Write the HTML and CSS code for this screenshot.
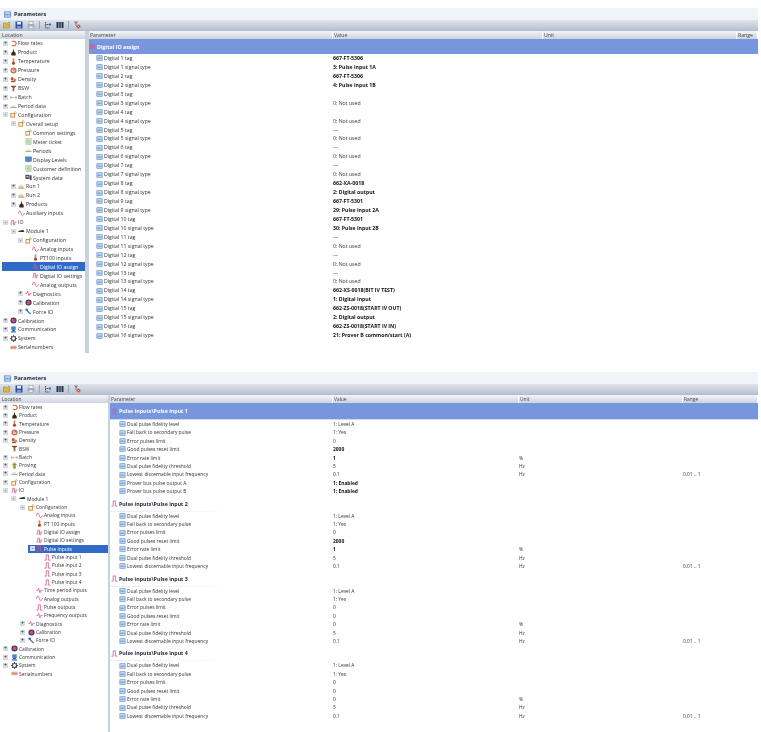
FILE: index.html
```html
<!DOCTYPE html>
<html lang="en">
<head>
    <meta charset="UTF-8">
    <meta name="viewport" content="width=device-width, initial-scale=1.0">
    <title>Parameters</title>
    <link rel="stylesheet" href="styles.css">
</head>
<body>

<svg class="defs" width="0" height="0">
    <symbol id="i-open" viewBox="0 0 16 16"><path d="M1 4h5l1 2h6v8H1z" fill="#e2b640" stroke="#a57a1c"/><path d="M9 4l3-2 2 3" fill="none" stroke="#4f9a3a" stroke-width="1.5"/></symbol>
    <symbol id="i-save" viewBox="0 0 16 16"><rect x="1" y="1" width="14" height="14" fill="#2b4fa8"/><rect x="4" y="2" width="8" height="5" fill="#e6ecf7"/><rect x="4" y="10" width="8" height="5" fill="#7f95c9"/></symbol>
    <symbol id="i-print" viewBox="0 0 16 16"><rect x="4" y="1" width="8" height="6" fill="#f2f2f2" stroke="#8b93a3"/><rect x="1" y="6" width="14" height="7" fill="#a9b0bd"/><rect x="4" y="10" width="8" height="5" fill="#eee" stroke="#8b93a3"/></symbol>
    <symbol id="i-tree" viewBox="0 0 16 16"><path d="M3 2v12h9M3 7h7" fill="none" stroke="#25304a" stroke-width="1.6" stroke-dasharray="2 1"/><rect x="10" y="5" width="4" height="4" fill="#2b6fc2"/></symbol>
    <symbol id="i-cols" viewBox="0 0 16 16"><path d="M1 2h14v12H1z" fill="#27304a"/><path d="M5 2v12M8 2v12M11 2v12" stroke="#cfd6e2"/></symbol>
    <symbol id="i-filter" viewBox="0 0 16 16"><path d="M2 1h8L7 6v6L5 10V6z" fill="#7d8696"/><circle cx="11" cy="11" r="4" fill="#d8452e"/><path d="M9 9l4 4M13 9l-4 4" stroke="#fff"/></symbol>
    <symbol id="i-param" viewBox="0 0 16 16"><rect x="1" y="2" width="14" height="12" fill="#c6daf3" stroke="#4a7fc0" stroke-width="1.6"/><path d="M3 8.5h10" stroke="#2f62a8" stroke-width="2.2" stroke-dasharray="3 1"/></symbol>
    <symbol id="i-flow" viewBox="0 0 16 16"><path d="M4 3h5a5 5 0 0 1 0 10H4" fill="none" stroke="#d9602c" stroke-width="2.4"/></symbol>
    <symbol id="i-product" viewBox="0 0 16 16"><path d="M7 1h2v4l4 4v6H3V9l4-4z" fill="#3b2a17"/></symbol>
    <symbol id="i-temp" viewBox="0 0 16 16"><rect x="6" y="1" width="4" height="10" fill="#c98a70"/><circle cx="8" cy="12" r="3.5" fill="#a4482c"/></symbol>
    <symbol id="i-press" viewBox="0 0 16 16"><circle cx="8" cy="8" r="7" fill="#c9764f"/><circle cx="8" cy="8" r="3.5" fill="#f0d2bf"/><path d="M8 8l3-3" stroke="#6d2d14" stroke-width="1.4"/></symbol>
    <symbol id="i-density" viewBox="0 0 16 16"><circle cx="5" cy="6" r="3.5" fill="#c0563a"/><circle cx="11" cy="9" r="3.5" fill="#d98a4c"/><rect x="2" y="11" width="9" height="3" fill="#a8432a"/></symbol>
    <symbol id="i-bsw" viewBox="0 0 16 16"><path d="M2 2h12l-4 5v7H6V7z" fill="#8c6a52"/><rect x="2" y="2" width="12" height="2" fill="#5f4635"/></symbol>
    <symbol id="i-batch" viewBox="0 0 16 16"><path d="M1 8h14" stroke="#6f8a58" stroke-width="1.6" stroke-dasharray="2 1.5"/><path d="M2 5v6M14 5v6" stroke="#a5763b" stroke-width="1.6"/></symbol>
    <symbol id="i-prove" viewBox="0 0 16 16"><circle cx="8" cy="6" r="5" fill="#d9b04a"/><circle cx="8" cy="6" r="2" fill="#8d6a1c"/><path d="M5 10v5h6v-5" fill="#7d9a4b"/></symbol>
    <symbol id="i-period" viewBox="0 0 16 16"><path d="M1 10h14" stroke="#6c9a55" stroke-width="1.8"/><path d="M4 7h8" stroke="#a9c79a" stroke-width="1.5"/></symbol>
    <symbol id="i-config" viewBox="0 0 16 16"><rect x="2" y="6" width="8" height="8" fill="none" stroke="#d58b1f" stroke-width="2.2"/><circle cx="12" cy="4" r="2.4" fill="none" stroke="#9a8a5a" stroke-width="1.4"/></symbol>
    <symbol id="i-doc" viewBox="0 0 16 16"><rect x="2" y="1" width="12" height="14" fill="#cfe5c6" stroke="#8fb585"/><path d="M4 5h8M4 8h8M4 11h8" stroke="#8fb585"/></symbol>
    <symbol id="i-display" viewBox="0 0 16 16"><rect x="1" y="2" width="14" height="10" fill="#4f8ac9" stroke="#2f5f97"/><rect x="5" y="12" width="6" height="2" fill="#6a7a8c"/></symbol>
    <symbol id="i-system" viewBox="0 0 16 16"><rect x="1" y="2" width="9" height="9" fill="#2e2e2e"/><rect x="3" y="4" width="5" height="4" fill="#cfcfcf"/><rect x="11" y="3" width="4" height="11" fill="#444"/></symbol>
    <symbol id="i-run" viewBox="0 0 16 16"><path d="M1 12h14" stroke="#7c7c55" stroke-width="1.4"/><path d="M3 12V7M7 12V4M11 12V7" stroke="#d29a2a" stroke-width="2"/></symbol>
    <symbol id="i-wave" viewBox="0 0 16 16"><path d="M1 9c2-9 4-9 6-2s4 9 8 0" fill="none" stroke="#d4558f" stroke-width="1.8"/></symbol>
    <symbol id="i-square" viewBox="0 0 16 16"><path d="M1 12h3V3h4v10h3V7h4" fill="none" stroke="#d4558f" stroke-width="1.8"/></symbol>
    <symbol id="i-pulse" viewBox="0 0 16 16"><path d="M1 14h4V2h5v12h5" fill="none" stroke="#d4558f" stroke-width="1.8"/></symbol>
    <symbol id="i-module" viewBox="0 0 16 16"><path d="M1 7l12-3v3l2 1-2 1H1z" fill="#30343d"/></symbol>
    <symbol id="i-time" viewBox="0 0 16 16"><path d="M1 8h3l2-5 3 10 2-5h4" fill="none" stroke="#d4558f" stroke-width="1.8"/></symbol>
    <symbol id="i-calib" viewBox="0 0 16 16"><circle cx="8" cy="8" r="7" fill="#3a3a46"/><circle cx="8" cy="8" r="4.5" fill="#c9488f"/></symbol>
    <symbol id="i-force" viewBox="0 0 16 16"><path d="M2 3l5 5 6 6" stroke="#3e78c4" stroke-width="3" fill="none"/><circle cx="4" cy="4" r="3" fill="#3e78c4"/></symbol>
    <symbol id="i-comm" viewBox="0 0 16 16"><rect x="3" y="1" width="10" height="8" fill="#3f86c6"/><rect x="5" y="9" width="6" height="3" fill="#24517f"/><rect x="2" y="12" width="12" height="3" fill="#3f86c6"/></symbol>
    <symbol id="i-gear" viewBox="0 0 16 16"><circle cx="8" cy="8" r="4.6" fill="none" stroke="#40444c" stroke-width="2.6"/><path d="M8 0v3M8 13v3M0 8h3M13 8h3M2.3 2.3l2 2M11.7 11.7l2 2M13.7 2.3l-2 2M4.3 11.7l-2 2" stroke="#40444c" stroke-width="2"/></symbol>
    <symbol id="i-serial" viewBox="0 0 16 16"><rect x="1" y="4" width="14" height="8" fill="#e7a78c"/><path d="M1 8h14" stroke="#c9795c"/></symbol>
</svg>

<div class="shot shot-top">
    <div class="titlebar"><svg class="ico"><use href="#i-param"/></svg><b>Parameters</b></div>
    <div class="toolbar">
        <svg class="tool"><use href="#i-open"/></svg><svg class="tool"><use href="#i-save"/></svg><svg class="tool"><use href="#i-print"/></svg><i class="sep"></i>
        <svg class="tool"><use href="#i-tree"/></svg><svg class="tool"><use href="#i-cols"/></svg><i class="sep"></i>
        <svg class="tool"><use href="#i-filter"/></svg>
    </div>
    <div class="panes">
        <div class="tree">
            <div class="head">Location</div>
            <div class="node l0"><i class="exp">+</i><svg class="ico"><use href="#i-flow"/></svg>Flow rates</div>
            <div class="node l0"><i class="exp">+</i><svg class="ico"><use href="#i-product"/></svg>Product</div>
            <div class="node l0"><i class="exp">+</i><svg class="ico"><use href="#i-temp"/></svg>Temperature</div>
            <div class="node l0"><i class="exp">+</i><svg class="ico"><use href="#i-press"/></svg>Pressure</div>
            <div class="node l0"><i class="exp">+</i><svg class="ico"><use href="#i-density"/></svg>Density</div>
            <div class="node l0"><i class="exp">+</i><svg class="ico"><use href="#i-bsw"/></svg>BSW</div>
            <div class="node l0"><i class="exp">+</i><svg class="ico"><use href="#i-batch"/></svg>Batch</div>
            <div class="node l0"><i class="exp">+</i><svg class="ico"><use href="#i-period"/></svg>Period data</div>
            <div class="node l0"><i class="exp">-</i><svg class="ico"><use href="#i-config"/></svg>Configuration</div>
            <div class="node l1"><i class="exp">-</i><svg class="ico"><use href="#i-config"/></svg>Overall setup</div>
            <div class="node l2"><i class="exp none"></i><svg class="ico"><use href="#i-config"/></svg>Common settings</div>
            <div class="node l2"><i class="exp none"></i><svg class="ico"><use href="#i-doc"/></svg>Meter ticket</div>
            <div class="node l2"><i class="exp none"></i><svg class="ico"><use href="#i-period"/></svg>Periods</div>
            <div class="node l2"><i class="exp none"></i><svg class="ico"><use href="#i-display"/></svg>Display Levels</div>
            <div class="node l2"><i class="exp none"></i><svg class="ico"><use href="#i-doc"/></svg>Customer definition</div>
            <div class="node l2"><i class="exp none"></i><svg class="ico"><use href="#i-system"/></svg>System data</div>
            <div class="node l1"><i class="exp">+</i><svg class="ico"><use href="#i-run"/></svg>Run 1</div>
            <div class="node l1"><i class="exp">+</i><svg class="ico"><use href="#i-run"/></svg>Run 2</div>
            <div class="node l1"><i class="exp">+</i><svg class="ico"><use href="#i-product"/></svg>Products</div>
            <div class="node l1"><i class="exp none"></i><svg class="ico"><use href="#i-wave"/></svg>Auxiliary inputs</div>
            <div class="node l0"><i class="exp">-</i><svg class="ico"><use href="#i-square"/></svg>IO</div>
            <div class="node l1"><i class="exp">-</i><svg class="ico"><use href="#i-module"/></svg>Module 1</div>
            <div class="node l2"><i class="exp">-</i><svg class="ico"><use href="#i-config"/></svg>Configuration</div>
            <div class="node l3"><i class="exp none"></i><svg class="ico"><use href="#i-wave"/></svg>Analog inputs</div>
            <div class="node l3"><i class="exp none"></i><svg class="ico"><use href="#i-temp"/></svg>PT100 inputs</div>
            <div class="node l3 sel"><i class="exp none"></i><svg class="ico"><use href="#i-square"/></svg>Digital IO assign</div>
            <div class="node l3"><i class="exp none"></i><svg class="ico"><use href="#i-square"/></svg>Digital IO settings</div>
            <div class="node l3"><i class="exp none"></i><svg class="ico"><use href="#i-wave"/></svg>Analog outputs</div>
            <div class="node l2"><i class="exp">+</i><svg class="ico"><use href="#i-time"/></svg>Diagnostics</div>
            <div class="node l2"><i class="exp">+</i><svg class="ico"><use href="#i-calib"/></svg>Calibration</div>
            <div class="node l2"><i class="exp">+</i><svg class="ico"><use href="#i-force"/></svg>Force IO</div>
            <div class="node l0"><i class="exp">+</i><svg class="ico"><use href="#i-calib"/></svg>Calibration</div>
            <div class="node l0"><i class="exp">+</i><svg class="ico"><use href="#i-comm"/></svg>Communication</div>
            <div class="node l0"><i class="exp">+</i><svg class="ico"><use href="#i-gear"/></svg>System</div>
            <div class="node l0"><i class="exp none"></i><svg class="ico"><use href="#i-serial"/></svg>Serialnumbers</div>
        </div>
        <div class="split"></div>
        <div class="table">
            <div class="row head"><span>Parameter</span><span>Value</span><span>Unit</span><span>Range</span></div>
            <div class="band"><svg class="ico"><use href="#i-square"/></svg>Digital IO assign</div>
            <div class="row"><span><svg class="pico"><use href="#i-param"/></svg>Digital 1 tag</span><span class="b">667-FT-5306</span><span></span><span></span></div>
            <div class="row"><span><svg class="pico"><use href="#i-param"/></svg>Digital 1 signal type</span><span class="b">3: Pulse input 1A</span><span></span><span></span></div>
            <div class="row"><span><svg class="pico"><use href="#i-param"/></svg>Digital 2 tag</span><span class="b">667-FT-5306</span><span></span><span></span></div>
            <div class="row"><span><svg class="pico"><use href="#i-param"/></svg>Digital 2 signal type</span><span class="b">4: Pulse input 1B</span><span></span><span></span></div>
            <div class="row"><span><svg class="pico"><use href="#i-param"/></svg>Digital 3 tag</span><span></span><span></span><span></span></div>
            <div class="row"><span><svg class="pico"><use href="#i-param"/></svg>Digital 3 signal type</span><span>0: Not used</span><span></span><span></span></div>
            <div class="row"><span><svg class="pico"><use href="#i-param"/></svg>Digital 4 tag</span><span></span><span></span><span></span></div>
            <div class="row"><span><svg class="pico"><use href="#i-param"/></svg>Digital 4 signal type</span><span>0: Not used</span><span></span><span></span></div>
            <div class="row"><span><svg class="pico"><use href="#i-param"/></svg>Digital 5 tag</span><span>---</span><span></span><span></span></div>
            <div class="row"><span><svg class="pico"><use href="#i-param"/></svg>Digital 5 signal type</span><span>0: Not used</span><span></span><span></span></div>
            <div class="row"><span><svg class="pico"><use href="#i-param"/></svg>Digital 6 tag</span><span>---</span><span></span><span></span></div>
            <div class="row"><span><svg class="pico"><use href="#i-param"/></svg>Digital 6 signal type</span><span>0: Not used</span><span></span><span></span></div>
            <div class="row"><span><svg class="pico"><use href="#i-param"/></svg>Digital 7 tag</span><span>---</span><span></span><span></span></div>
            <div class="row"><span><svg class="pico"><use href="#i-param"/></svg>Digital 7 signal type</span><span>0: Not used</span><span></span><span></span></div>
            <div class="row"><span><svg class="pico"><use href="#i-param"/></svg>Digital 8 tag</span><span class="b">662-XA-0018</span><span></span><span></span></div>
            <div class="row"><span><svg class="pico"><use href="#i-param"/></svg>Digital 8 signal type</span><span class="b">2: Digital output</span><span></span><span></span></div>
            <div class="row"><span><svg class="pico"><use href="#i-param"/></svg>Digital 9 tag</span><span class="b">667-FT-5301</span><span></span><span></span></div>
            <div class="row"><span><svg class="pico"><use href="#i-param"/></svg>Digital 9 signal type</span><span class="b">29: Pulse input 2A</span><span></span><span></span></div>
            <div class="row"><span><svg class="pico"><use href="#i-param"/></svg>Digital 10 tag</span><span class="b">667-FT-5301</span><span></span><span></span></div>
            <div class="row"><span><svg class="pico"><use href="#i-param"/></svg>Digital 10 signal type</span><span class="b">30: Pulse input 2B</span><span></span><span></span></div>
            <div class="row"><span><svg class="pico"><use href="#i-param"/></svg>Digital 11 tag</span><span>---</span><span></span><span></span></div>
            <div class="row"><span><svg class="pico"><use href="#i-param"/></svg>Digital 11 signal type</span><span>0: Not used</span><span></span><span></span></div>
            <div class="row"><span><svg class="pico"><use href="#i-param"/></svg>Digital 12 tag</span><span>---</span><span></span><span></span></div>
            <div class="row"><span><svg class="pico"><use href="#i-param"/></svg>Digital 12 signal type</span><span>0: Not used</span><span></span><span></span></div>
            <div class="row"><span><svg class="pico"><use href="#i-param"/></svg>Digital 13 tag</span><span>---</span><span></span><span></span></div>
            <div class="row"><span><svg class="pico"><use href="#i-param"/></svg>Digital 13 signal type</span><span>0: Not used</span><span></span><span></span></div>
            <div class="row"><span><svg class="pico"><use href="#i-param"/></svg>Digital 14 tag</span><span class="b">662-XS-0018(BIT IV TEST)</span><span></span><span></span></div>
            <div class="row"><span><svg class="pico"><use href="#i-param"/></svg>Digital 14 signal type</span><span class="b">1: Digital input</span><span></span><span></span></div>
            <div class="row"><span><svg class="pico"><use href="#i-param"/></svg>Digital 15 tag</span><span class="b">662-ZS-0018(START IV OUT)</span><span></span><span></span></div>
            <div class="row"><span><svg class="pico"><use href="#i-param"/></svg>Digital 15 signal type</span><span class="b">2: Digital output</span><span></span><span></span></div>
            <div class="row"><span><svg class="pico"><use href="#i-param"/></svg>Digital 16 tag</span><span class="b">662-ZS-0018(START IV IN)</span><span></span><span></span></div>
            <div class="row"><span><svg class="pico"><use href="#i-param"/></svg>Digital 16 signal type</span><span class="b">21: Prover B common/start (A)</span><span></span><span></span></div>
        </div>
    </div>
</div>

<div class="shot shot-bottom">
    <div class="titlebar"><svg class="ico"><use href="#i-param"/></svg><b>Parameters</b></div>
    <div class="toolbar">
        <svg class="tool"><use href="#i-open"/></svg><svg class="tool"><use href="#i-save"/></svg><svg class="tool"><use href="#i-print"/></svg><i class="sep"></i>
        <svg class="tool"><use href="#i-tree"/></svg><svg class="tool"><use href="#i-cols"/></svg><i class="sep"></i>
        <svg class="tool"><use href="#i-filter"/></svg>
    </div>
    <div class="panes">
        <div class="tree">
            <div class="head">Location</div>
            <div class="node l0"><i class="exp">+</i><svg class="ico"><use href="#i-flow"/></svg>Flow rates</div>
            <div class="node l0"><i class="exp">+</i><svg class="ico"><use href="#i-product"/></svg>Product</div>
            <div class="node l0"><i class="exp">+</i><svg class="ico"><use href="#i-temp"/></svg>Temperature</div>
            <div class="node l0"><i class="exp">+</i><svg class="ico"><use href="#i-press"/></svg>Pressure</div>
            <div class="node l0"><i class="exp">+</i><svg class="ico"><use href="#i-density"/></svg>Density</div>
            <div class="node l0"><i class="exp none"></i><svg class="ico"><use href="#i-bsw"/></svg>BSW</div>
            <div class="node l0"><i class="exp">+</i><svg class="ico"><use href="#i-batch"/></svg>Batch</div>
            <div class="node l0"><i class="exp">+</i><svg class="ico"><use href="#i-prove"/></svg>Proving</div>
            <div class="node l0"><i class="exp">+</i><svg class="ico"><use href="#i-period"/></svg>Period data</div>
            <div class="node l0"><i class="exp">+</i><svg class="ico"><use href="#i-config"/></svg>Configuration</div>
            <div class="node l0"><i class="exp">-</i><svg class="ico"><use href="#i-square"/></svg>IO</div>
            <div class="node l1"><i class="exp">-</i><svg class="ico"><use href="#i-module"/></svg>Module 1</div>
            <div class="node l2"><i class="exp">-</i><svg class="ico"><use href="#i-config"/></svg>Configuration</div>
            <div class="node l3"><i class="exp none"></i><svg class="ico"><use href="#i-wave"/></svg>Analog inputs</div>
            <div class="node l3"><i class="exp none"></i><svg class="ico"><use href="#i-temp"/></svg>PT 100 inputs</div>
            <div class="node l3"><i class="exp none"></i><svg class="ico"><use href="#i-square"/></svg>Digital IO assign</div>
            <div class="node l3"><i class="exp none"></i><svg class="ico"><use href="#i-square"/></svg>Digital IO settings</div>
            <div class="node l3 sel"><i class="exp">-</i><svg class="ico"><use href="#i-pulse"/></svg>Pulse inputs</div>
            <div class="node l4"><i class="exp none"></i><svg class="ico"><use href="#i-pulse"/></svg>Pulse input 1</div>
            <div class="node l4"><i class="exp none"></i><svg class="ico"><use href="#i-pulse"/></svg>Pulse input 2</div>
            <div class="node l4"><i class="exp none"></i><svg class="ico"><use href="#i-pulse"/></svg>Pulse input 3</div>
            <div class="node l4"><i class="exp none"></i><svg class="ico"><use href="#i-pulse"/></svg>Pulse input 4</div>
            <div class="node l3"><i class="exp none"></i><svg class="ico"><use href="#i-time"/></svg>Time period inputs</div>
            <div class="node l3"><i class="exp none"></i><svg class="ico"><use href="#i-wave"/></svg>Analog outputs</div>
            <div class="node l3"><i class="exp none"></i><svg class="ico"><use href="#i-pulse"/></svg>Pulse outputs</div>
            <div class="node l3"><i class="exp none"></i><svg class="ico"><use href="#i-time"/></svg>Frequency outputs</div>
            <div class="node l2"><i class="exp">+</i><svg class="ico"><use href="#i-time"/></svg>Diagnostics</div>
            <div class="node l2"><i class="exp">+</i><svg class="ico"><use href="#i-calib"/></svg>Calibration</div>
            <div class="node l2"><i class="exp">+</i><svg class="ico"><use href="#i-force"/></svg>Force IO</div>
            <div class="node l0"><i class="exp">+</i><svg class="ico"><use href="#i-calib"/></svg>Calibration</div>
            <div class="node l0"><i class="exp">+</i><svg class="ico"><use href="#i-comm"/></svg>Communication</div>
            <div class="node l0"><i class="exp">+</i><svg class="ico"><use href="#i-gear"/></svg>System</div>
            <div class="node l0"><i class="exp none"></i><svg class="ico"><use href="#i-serial"/></svg>Serialnumbers</div>
        </div>
        <div class="split"></div>
        <div class="table">
            <div class="row head"><span>Parameter</span><span>Value</span><span>Unit</span><span>Range</span></div>
            <div class="band"><svg class="ico"><use href="#i-pulse"/></svg>Pulse inputs\Pulse input 1</div>
            <div class="row"><span><svg class="pico"><use href="#i-param"/></svg>Dual pulse fidelity level</span><span>1: Level A</span><span></span><span></span></div>
            <div class="row"><span><svg class="pico"><use href="#i-param"/></svg>Fall back to secondary pulse</span><span>1: Yes</span><span></span><span></span></div>
            <div class="row"><span><svg class="pico"><use href="#i-param"/></svg>Error pulses limit</span><span>0</span><span></span><span></span></div>
            <div class="row"><span><svg class="pico"><use href="#i-param"/></svg>Good pulses reset limit</span><span class="b">2000</span><span></span><span></span></div>
            <div class="row"><span><svg class="pico"><use href="#i-param"/></svg>Error rate limit</span><span class="b">1</span><span>%</span><span></span></div>
            <div class="row"><span><svg class="pico"><use href="#i-param"/></svg>Dual pulse fidelity threshold</span><span>5</span><span>Hz</span><span></span></div>
            <div class="row"><span><svg class="pico"><use href="#i-param"/></svg>Lowest discernable input frequency</span><span>0.1</span><span>Hz</span><span>0.01 .. 1</span></div>
            <div class="row"><span><svg class="pico"><use href="#i-param"/></svg>Prover bus pulse output A</span><span class="b">1: Enabled</span><span></span><span></span></div>
            <div class="row"><span><svg class="pico"><use href="#i-param"/></svg>Prover bus pulse output B</span><span class="b">1: Enabled</span><span></span><span></span></div>
            <div class="section"><svg class="ico"><use href="#i-pulse"/></svg><b>Pulse inputs\Pulse input 2</b></div>
            <div class="row"><span><svg class="pico"><use href="#i-param"/></svg>Dual pulse fidelity level</span><span>1: Level A</span><span></span><span></span></div>
            <div class="row"><span><svg class="pico"><use href="#i-param"/></svg>Fall back to secondary pulse</span><span>1: Yes</span><span></span><span></span></div>
            <div class="row"><span><svg class="pico"><use href="#i-param"/></svg>Error pulses limit</span><span>0</span><span></span><span></span></div>
            <div class="row"><span><svg class="pico"><use href="#i-param"/></svg>Good pulses reset limit</span><span class="b">2000</span><span></span><span></span></div>
            <div class="row"><span><svg class="pico"><use href="#i-param"/></svg>Error rate limit</span><span class="b">1</span><span>%</span><span></span></div>
            <div class="row"><span><svg class="pico"><use href="#i-param"/></svg>Dual pulse fidelity threshold</span><span>5</span><span>Hz</span><span></span></div>
            <div class="row"><span><svg class="pico"><use href="#i-param"/></svg>Lowest discernable input frequency</span><span>0.1</span><span>Hz</span><span>0.01 .. 1</span></div>
            <div class="section"><svg class="ico"><use href="#i-pulse"/></svg><b>Pulse inputs\Pulse input 3</b></div>
            <div class="row"><span><svg class="pico"><use href="#i-param"/></svg>Dual pulse fidelity level</span><span>1: Level A</span><span></span><span></span></div>
            <div class="row"><span><svg class="pico"><use href="#i-param"/></svg>Fall back to secondary pulse</span><span>1: Yes</span><span></span><span></span></div>
            <div class="row"><span><svg class="pico"><use href="#i-param"/></svg>Error pulses limit</span><span>0</span><span></span><span></span></div>
            <div class="row"><span><svg class="pico"><use href="#i-param"/></svg>Good pulses reset limit</span><span>0</span><span></span><span></span></div>
            <div class="row"><span><svg class="pico"><use href="#i-param"/></svg>Error rate limit</span><span>0</span><span>%</span><span></span></div>
            <div class="row"><span><svg class="pico"><use href="#i-param"/></svg>Dual pulse fidelity threshold</span><span>5</span><span>Hz</span><span></span></div>
            <div class="row"><span><svg class="pico"><use href="#i-param"/></svg>Lowest discernable input frequency</span><span>0.1</span><span>Hz</span><span>0.01 .. 1</span></div>
            <div class="section"><svg class="ico"><use href="#i-pulse"/></svg><b>Pulse inputs\Pulse input 4</b></div>
            <div class="row"><span><svg class="pico"><use href="#i-param"/></svg>Dual pulse fidelity level</span><span>1: Level A</span><span></span><span></span></div>
            <div class="row"><span><svg class="pico"><use href="#i-param"/></svg>Fall back to secondary pulse</span><span>1: Yes</span><span></span><span></span></div>
            <div class="row"><span><svg class="pico"><use href="#i-param"/></svg>Error pulses limit</span><span>0</span><span></span><span></span></div>
            <div class="row"><span><svg class="pico"><use href="#i-param"/></svg>Good pulses reset limit</span><span>0</span><span></span><span></span></div>
            <div class="row"><span><svg class="pico"><use href="#i-param"/></svg>Error rate limit</span><span>0</span><span>%</span><span></span></div>
            <div class="row"><span><svg class="pico"><use href="#i-param"/></svg>Dual pulse fidelity threshold</span><span>5</span><span>Hz</span><span></span></div>
            <div class="row"><span><svg class="pico"><use href="#i-param"/></svg>Lowest discernable input frequency</span><span>0.1</span><span>Hz</span><span>0.01 .. 1</span></div>
        </div>
    </div>
</div>

</body>
</html>
```

FILE: styles.css
```css
body {
    margin: 0;
    background-color: #fff;
    font-family: "Open Sans", "Liberation Sans", sans-serif;
    color: #333;
    overflow: hidden;
}
.defs {
    display: block;
    height: 0;
}
.shot {
    width: 758px;
    display: flex;
    flex-direction: column;
    overflow: hidden;
    filter: blur(0.35px);
}
.shot-top {
    height: 345px;
    margin-top: 8px;
    font-size: 5.2px;
    --row: 8.94px;
    --node: 8.94px;
    --tree: 85px;
    --cols: 244px 210px 194px 1fr;
    --name-pad: 7px;
    --band: 15px;
}
.shot-bottom {
    height: 360px;
    margin-top: 19px;
    font-size: 4.9px;
    --row: 8.42px;
    --node: 8.34px;
    --tree: 108px;
    --cols: 223px 186px 164px 1fr;
    --name-pad: 9px;
    --band: 17px;
}
.titlebar {
    height: 12px;
    flex: none;
    display: flex;
    align-items: center;
    padding-left: 4px;
    gap: 2px;
    background-color: #f0f3f7;
    color: #1d2433;
    font-size: 5.5px;
}
.toolbar {
    height: 10px;
    flex: none;
    display: flex;
    align-items: center;
    padding-left: 3px;
    gap: 4px;
    background: linear-gradient(#dfe4ec, #b9c2d2);
}
.tool {
    width: 8px;
    height: 8px;
}
.sep {
    width: 1px;
    height: 8px;
    background-color: #98a3b6;
}
.ico {
    width: 7px;
    height: 7px;
    flex: none;
    margin-right: 1px;
}
.panes {
    flex: 1;
    min-height: 0;
    display: flex;
    border-top: 1px solid #b4bdcd;
}
.tree {
    width: var(--tree);
    flex: none;
    background-color: #fff;
}
.split {
    width: 4px;
    flex: none;
    background-color: #c9d1dd;
}
.shot-bottom .split {
    width: 2px;
}
.table {
    flex: 1;
    min-width: 0;
    background-color: #fff;
}
.head {
    height: 8px;
    line-height: 8px;
    padding-left: 2px;
    background: linear-gradient(#f3f5f8, #cdd4df);
    color: #444;
}
.node {
    height: var(--node);
    display: flex;
    align-items: center;
    white-space: nowrap;
    box-sizing: border-box;
}
.exp {
    width: 5px;
    height: 5px;
    flex: none;
    margin-right: 2px;
    background-color: #d6dbe3;
    color: #222;
    font-style: normal;
    font-size: 5px;
    line-height: 5px;
    text-align: center;
}
.exp.none {
    background: none;
}
.l0 { padding-left: 3px; }
.l1 { padding-left: 11px; }
.l2 { padding-left: 18px; }
.l3 { padding-left: 25px; }
.l4 { padding-left: 33px; }
.shot-top .sel {
    margin-left: 2px;
    padding-left: 23px;
}
.shot-bottom .exp { margin-right: 3px; }
.shot-bottom .l1 { padding-left: 11px; }
.shot-bottom .l2 { padding-left: 20px; }
.shot-bottom .l3 { padding-left: 28px; }
.shot-bottom .l4 { padding-left: 36px; }
.shot-bottom .sel {
    margin-left: 28px;
    padding-left: 2px;
}
.shot-bottom .sel .exp {
    margin-right: 1px;
}
.sel {
    background-color: #316ac5;
    color: #fff;
}
.band {
    height: var(--band);
    display: flex;
    align-items: center;
    background-color: #7896dd;
    color: #fff;
    font-weight: 700;
    font-size: 5.3px;
}
.shot-bottom .band {
    padding-left: 1px;
    border-bottom: 1px solid #cdd8f0;
    box-sizing: border-box;
}
.row {
    height: var(--row);
    line-height: var(--row);
    display: grid;
    grid-template-columns: var(--cols);
    white-space: nowrap;
}
.row.head {
    height: 8px;
    line-height: 8px;
    padding-left: 0;
}
.row.head span {
    padding-left: 1px;
    border-right: 1px solid #fff;
}
.row span {
    display: flex;
    align-items: center;
    overflow: hidden;
}
.row > span:first-child:not(:only-child) {
    padding-left: var(--name-pad);
}
.row.head > span:first-child {
    padding-left: 1px;
}
.b {
    font-weight: 700;
    color: #111;
}
.pico {
    width: 7px;
    height: 6px;
    flex: none;
    margin-right: 1px;
}
.section {
    height: 16px;
    display: flex;
    align-items: center;
    padding-left: 1px;
    color: #1d2433;
    font-size: 5.3px;
    background: linear-gradient(90deg, #e8ecf2, #fff 130px) no-repeat bottom left / 100% 1px;
}
```
